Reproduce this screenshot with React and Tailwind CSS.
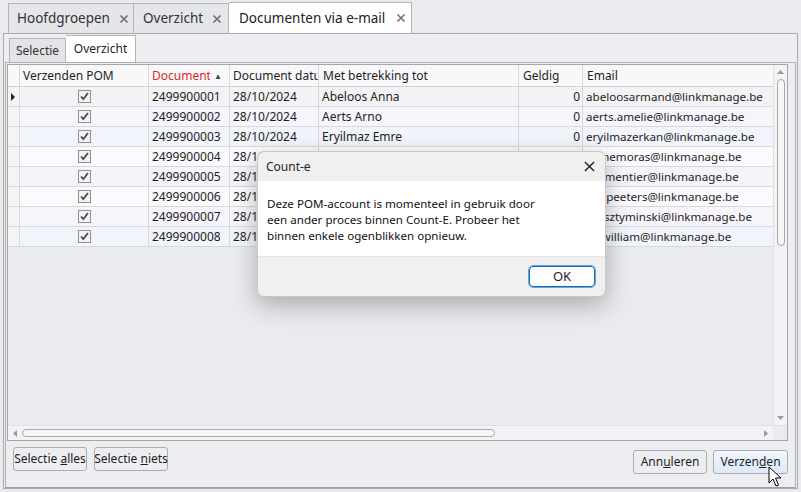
import React from "react";

const rows = [
  ["2499900001", "28/10/2024", "Abeloos Anna", "0", "abeloosarmand@linkmanage.be"],
  ["2499900002", "28/10/2024", "Aerts Arno", "0", "aerts.amelie@linkmanage.be"],
  ["2499900003", "28/10/2024", "Eryilmaz Emre", "0", "eryilmazerkan@linkmanage.be"],
  ["2499900004", "28/10/2024", "", "0", "jaimemoras@linkmanage.be"],
  ["2499900005", "28/10/2024", "", "0", "parmentier@linkmanage.be"],
  ["2499900006", "28/10/2024", "", "0", "anapeeters@linkmanage.be"],
  ["2499900007", "28/10/2024", "", "0", "teusztyminski@linkmanage.be"],
  ["2499900008", "28/10/2024", "", "0", "loswilliam@linkmanage.be"],
];

const rowBg = ["bg-[#f3f3f5]", "bg-[#f7f4fc]", "bg-[#f1f4fa]", "bg-[#fbfbfd]", "bg-[#f4f4fa]", "bg-[#fbfbfd]", "bg-[#f7f4fc]", "bg-[#f1f4fa]"];

function Check() {
  return (
    <div className="w-[13px] h-[13px] border border-[#8e8f8f] bg-[#f3f3f3] flex items-center justify-center">
      <svg width="11" height="11" viewBox="0 0 11 11">
        <path d="M2 5.5 L4.3 8 L9 2" fill="none" stroke="#4a4a4a" strokeWidth="1.8" />
      </svg>
    </div>
  );
}

function X({ size = 10, color = "#707070", w = 1.6 }) {
  return (
    <svg width={size} height={size} viewBox="0 0 10 10" className="shrink-0">
      <path d="M1.5 1.5 L8.5 8.5 M8.5 1.5 L1.5 8.5" stroke={color} strokeWidth={w} />
    </svg>
  );
}

function Btn({ children, className = "" }) {
  return (
    <div className={`h-[24px] border border-[#acacac] rounded-[3px] flex items-center justify-center text-[12px] text-[#1e1e1e] whitespace-nowrap ${className}`}>
      <span>{children}</span>
    </div>
  );
}

export default function App() {
  return (
    <div className="w-[801px] h-[492px] bg-[#e9ebee] relative overflow-hidden text-[#1e1e1e]" style={{ fontFamily: '"Noto Sans", "Open Sans", sans-serif' }}>
      {/* top tabs */}
      <div className="flex items-end pl-[8px] pt-[3px] h-[33px] whitespace-nowrap">
        <div className="h-[30px] w-[126px] border border-b-0 border-[#b4b4b4] bg-[#e4e6e9] flex items-center pl-[8px] gap-[9px] text-[13.5px] text-[#333]">
          <span>Hoofdgroepen</span> <X />
        </div>
        <div className="h-[30px] w-[95px] border border-b-0 border-l-0 border-[#b4b4b4] bg-[#e4e6e9] flex items-center pl-[9px] gap-[9px] text-[13.5px] text-[#333]">
          <span>Overzicht</span> <X />
        </div>
        <div className="h-[31px] w-[183px] border border-b-0 border-l-0 border-[#b4b4b4] bg-white flex items-center pl-[10px] gap-[11px] text-[13.5px] text-[#222]">
          <span>Documenten via e-mail</span> <X />
        </div>
      </div>

      {/* main panel */}
      <div className="mx-[3px] h-[456px] border border-[#a9a9a9] bg-[#eceef1] flex flex-col">
        {/* sub tabs */}
        <div className="flex items-end pl-[5px] h-[28px]">
          <div className="h-[24px] w-[57px] border border-b-0 border-[#b4b4b4] bg-[#e2e4e7] flex items-center justify-center text-[12px] text-[#333]">Selectie</div>
          <div className="h-[27px] w-[70px] border border-b-0 border-l-0 border-[#b4b4b4] bg-white flex items-center justify-center text-[12px]">Overzicht</div>
        </div>
        <div className="mx-[1px] flex-1 border border-[#b0b0b0] border-b-[#a0a0a0] flex flex-col pr-[7px] pl-[1px] pt-[1px]">
          {/* grid */}
          <div className="h-[377px] border border-[#a5a5a5] bg-[#e9ebef] flex flex-col">
            <div className="flex flex-1 min-h-0">
              <div className="flex-1 flex flex-col min-w-0">
                {/* header */}
                <div className="flex h-[22px] bg-[#f8f8fa] border-b border-[#d2d3d6] text-[12px] text-[#1e1e1e] whitespace-nowrap">
                  <div className="w-[12px] border-r border-[#d8d8da]"></div>
                  <div className="w-[129px] border-r border-[#d8d8da] flex items-center pl-[3px]">Verzenden POM</div>
                  <div className="w-[81px] border-r border-[#d8d8da] flex items-center pl-[3px] text-[#d62b2b] overflow-hidden">
                    <span className="w-[58px] overflow-hidden">Document</span><span className="text-[#444] text-[8px] ml-[4px]">▲</span>
                  </div>
                  <div className="w-[89px] border-r border-[#d8d8da] flex items-center pl-[3px] overflow-hidden">Document datum</div>
                  <div className="w-[200px] border-r border-[#d8d8da] flex items-center pl-[4px]">Met betrekking tot</div>
                  <div className="w-[64px] border-r border-[#d8d8da] flex items-center pl-[4px]">Geldig</div>
                  <div className="flex-1 flex items-center pl-[4px]">Email</div>
                </div>
                {rows.map((r, i) => (
                  <div key={i} className={`flex h-[20px] border-b border-[#d8d9dc] text-[12px] whitespace-nowrap ${rowBg[i]}`}>
                    <div className="w-[12px] border-r border-[#d8d8da] bg-[#f4f4f6] flex items-center justify-center">
                      {i === 0 && (
                        <svg width="5" height="8" viewBox="0 0 5 8"><path d="M0 0 L4 4 L0 8Z" fill="#222" /></svg>
                      )}
                    </div>
                    <div className="w-[129px] border-r border-[#d8d8da] flex items-center justify-center"><Check /></div>
                    <div className="w-[81px] border-r border-[#d8d8da] flex items-center pl-[3px]">{r[0]}</div>
                    <div className="w-[89px] border-r border-[#d8d8da] flex items-center pl-[3px]">{r[1]}</div>
                    <div className="w-[200px] border-r border-[#d8d8da] flex items-center pl-[3px]">{r[2]}</div>
                    <div className="w-[64px] border-r border-[#d8d8da] flex items-center justify-end pr-[2px]">{r[3]}</div>
                    <div className="flex-1 flex items-center pl-[3px] overflow-hidden text-[11.6px]">{r[4]}</div>
                  </div>
                ))}
              </div>
              {/* vertical scrollbar */}
              <div className="w-[14px] bg-[#f2f3f5] border-l border-[#e0e0e2] flex flex-col items-center">
                <div className="h-[14px] flex items-center justify-center">
                  <svg width="7" height="4" viewBox="0 0 7 4"><path d="M0 4 L3.5 0 L7 4Z" fill="#9a9a9a" /></svg>
                </div>
                <div className="w-[8px] h-[167px] border border-[#a8a8a8] rounded-full bg-[#f6f6f6]"></div>
                <div className="flex-1"></div>
                <div className="h-[14px] flex items-center justify-center">
                  <svg width="7" height="4" viewBox="0 0 7 4"><path d="M0 0 L3.5 4 L7 0Z" fill="#9a9a9a" /></svg>
                </div>
              </div>
            </div>
            {/* horizontal scrollbar */}
            <div className="h-[15px] flex bg-[#f2f3f5] border-t border-[#e2e2e4]">
              <div className="flex-1 flex items-center">
                <div className="w-[14px] flex items-center justify-center">
                  <svg width="4" height="7" viewBox="0 0 4 7"><path d="M4 0 L0 3.5 L4 7Z" fill="#9a9a9a" /></svg>
                </div>
                <div className="w-[473px] h-[8px] border border-[#a8a8a8] rounded-full bg-[#f6f6f6]"></div>
                <div className="flex-1"></div>
                <div className="w-[14px] flex items-center justify-center">
                  <svg width="4" height="7" viewBox="0 0 4 7"><path d="M0 0 L4 3.5 L0 7Z" fill="#9a9a9a" /></svg>
                </div>
              </div>
              <div className="w-[14px] bg-[#e9ebef]"></div>
            </div>
          </div>
          {/* bottom buttons */}
          <div className="flex items-start pt-[6px] pl-[6px]">
            <Btn className="w-[74px] bg-[#eceef1]">Selectie <span className="underline">a</span>lles</Btn>
            <Btn className="w-[74px] ml-[7px] bg-[#eceef1]">Selectie <span className="underline">n</span>iets</Btn>
            <div className="flex-1"></div>
            <Btn className="w-[74px] mt-[3px] bg-[#eceef1]">Ann<span className="underline">u</span>leren</Btn>
            <Btn className="w-[75px] mt-[3px] ml-[6px] bg-gradient-to-b from-[#f1f6fe] to-[#dde9fb] border-[#9aa6bb]">Verzen<span className="underline">d</span>en</Btn>
          </div>
        </div>
      </div>

      {/* dialog */}
      <div className="absolute left-[257px] top-[151px] w-[349px] h-[146px] rounded-[7px] border border-[#c8c8c8] bg-[#f0f0f0] overflow-hidden flex flex-col shadow-[0_8px_24px_rgba(0,0,0,0.28)]">
        <div className="h-[29px] flex items-center justify-between pl-[8px] pr-[9px] text-[12px]">
          <span>Count-e</span>
          <X size={13} color="#222" w={1.1} />
        </div>
        <div className="h-[75px] bg-white pl-[9px] pt-[15px] text-[11.6px] leading-[16px] text-[#111]">
          Deze POM-account is momenteel in gebruik door<br />
          een ander proces binnen Count-E. Probeer het<br />
          binnen enkele ogenblikken opnieuw.
        </div>
        <div className="flex-1 flex items-center justify-end pr-[10px] border-t border-[#e6e6e6]">
          <div className="w-[66px] h-[21px] border border-[#0f6cbd] rounded-[4px] bg-[#fdfdfd] flex items-center justify-center text-[13px] outline outline-1 outline-[#6fa3d8]">OK</div>
        </div>
      </div>

      {/* cursor */}
      <svg className="absolute left-[768px] top-[466px]" width="14" height="22" viewBox="0 0 14 22">
        <path d="M1 1 L1 17 L5 13 L8 20 L10.5 19 L7.5 12 L13 12 Z" fill="white" stroke="black" strokeWidth="1" strokeLinejoin="round" />
      </svg>
    </div>
  );
}
